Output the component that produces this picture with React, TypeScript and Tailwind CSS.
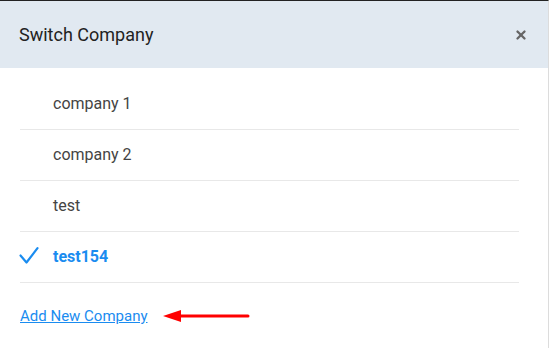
import { X } from "lucide-react";

const companies = [
  { id: 1, name: "company 1" },
  { id: 2, name: "company 2" },
  { id: 3, name: "test" },
  { id: 4, name: "test154", active: true },
];

export default function App() {
  return (
    <div
      className="h-[348px] w-[549px] overflow-hidden border-t border-t-[#222] border-r border-r-[#dcdcdc] bg-white"
      style={{ fontFamily: "Roboto, 'Liberation Sans', sans-serif" }}
    >
      <div className="flex h-[67px] items-center justify-between bg-[#e1e9f1] pl-[19px] pr-[20px]">
        <h2 className="text-[18px] font-normal text-[#222]">Switch Company</h2>
        <X className="h-[14px] w-[14px] text-[#666]" strokeWidth={4} />
      </div>
      <ul className="ml-[20px] mr-[29px] mt-[11px]">
        {companies.map((c) => (
          <li
            key={c.id}
            className="flex h-[51px] items-center border-b border-[#e8e8e8]"
          >
            <span className="-ml-[1px] flex w-[34px] shrink-0 items-center">
              {c.active && (
                <svg width="20" height="20" viewBox="0 0 20 20" fill="none">
                  <path
                    d="M1.5 8.5 L7.5 15.5 L18.5 1.2"
                    stroke="#1a8cf0"
                    strokeWidth="2.2"
                    strokeLinecap="round"
                    strokeLinejoin="round"
                  />
                </svg>
              )}
            </span>
            <span
              className={
                c.active
                  ? "text-[16px] font-bold text-[#1a8cf0]"
                  : "text-[16px] text-[#444]"
              }
            >
              {c.name}
            </span>
          </li>
        ))}
      </ul>
      <div className="mx-[20px] mt-[22px] flex items-center">
        <a href="#" className="text-[15px] text-[#1a8cf0] underline">
          Add New Company
        </a>
        <svg width="90" height="16" viewBox="0 0 90 16" className="ml-[14px]">
          <path d="M18 8 H86" stroke="#f00" strokeWidth="3" strokeLinecap="round" />
          <path d="M1 8 L19 2 L19 14 Z" fill="#f00" />
        </svg>
      </div>
    </div>
  );
}
